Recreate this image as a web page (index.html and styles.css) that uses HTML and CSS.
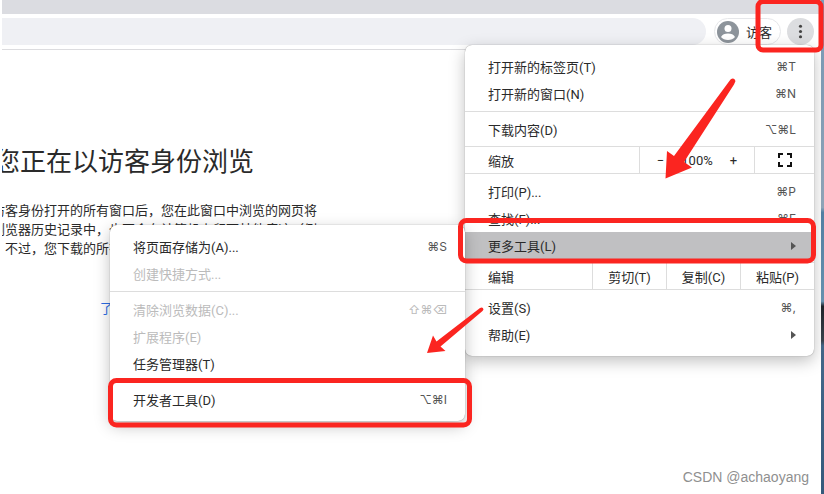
FILE: index.html
```
<!DOCTYPE html>
<html lang="zh-CN">

<head>
    <meta charset="UTF-8">
    <meta name="viewport" content="width=device-width, initial-scale=1.0">
    <title>访客</title>
    <link rel="stylesheet" href="styles.css">
</head>

<body>

    <div class="desktop">
        <div class="browser">
            <div class="tabstrip"></div>
            <div class="toolbar">
                <input class="omnibox" type="text" aria-label="地址栏">
                <button class="profile" type="button">
                    <svg class="avatar" viewBox="0 0 22 22" aria-hidden="true">
                        <circle cx="11" cy="11" r="11" fill="#8d949b" />
                        <circle cx="11" cy="7.5" r="3.5" fill="#fff" />
                        <path d="M4 16C5 13.500 8 12.500 11 12.500S17 13.500 18 16C16.500 18 14 19 11 19S5.500 18 4 16Z" fill="#fff" />
                    </svg>
                    访客
                </button>
                <button class="more" type="button" aria-label="更多">
                    <svg viewBox="0 0 26 26" aria-hidden="true">
                        <circle cx="13" cy="8" r="1.500" />
                        <circle cx="13" cy="13" r="1.500" />
                        <circle cx="13" cy="18" r="1.500" />
                    </svg>
                </button>
            </div>
            <main class="page">
                <h1>您正在以访客身份浏览</h1>
                <p>访客身份打开的所有窗口后，您在此窗口中浏览的网页将<br>浏览器历史记录中，也不会在计算机上留下其他痕迹（例<br>。不过，您下载的所有文件都会保留。</p>
                <a class="learn" href="#">了解详情</a>
            </main>
        </div>
        <div class="wallpaper"></div>
    </div>

    <div class="menu main-menu">
        <div class="group">
            <button class="item" type="button">打开新的标签页(T)<kbd>⌘T</kbd></button>
            <button class="item" type="button">打开新的窗口(N)<kbd>⌘N</kbd></button>
        </div>
        <div class="group">
            <button class="item" type="button">下载内容(D)<kbd>⌥⌘L</kbd></button>
        </div>
        <div class="split zoom-row">
            <span class="name">缩放</span>
            <div class="zoom">
                <button type="button">−</button>
                <span>100%</span>
                <button type="button">+</button>
            </div>
            <button class="full" type="button" aria-label="全屏">
                <svg viewBox="0 0 14 14" aria-hidden="true">
                    <path d="M1 5V1H5M9 1H13V5M13 9V13H9M5 13H1V9" />
                </svg>
            </button>
        </div>
        <div class="group">
            <button class="item" type="button">打印(P)...<kbd>⌘P</kbd></button>
            <button class="item" type="button">查找(F)...<kbd>⌘F</kbd></button>
            <button class="item active" type="button">更多工具(L)<span class="arrow"></span></button>
        </div>
        <div class="split edit-row">
            <span class="name">编辑</span>
            <button type="button">剪切(T)</button>
            <button type="button">复制(C)</button>
            <button type="button">粘贴(P)</button>
        </div>
        <div class="group">
            <button class="item" type="button">设置(S)<kbd>⌘,</kbd></button>
            <button class="item" type="button">帮助(E)<span class="arrow"></span></button>
        </div>
    </div>

    <div class="menu sub-menu">
        <div class="group">
            <button class="item" type="button">将页面存储为(A)...<kbd>⌘S</kbd></button>
            <button class="item" type="button" disabled>创建快捷方式...</button>
        </div>
        <div class="group">
            <button class="item" type="button" disabled>清除浏览数据(C)...<kbd>⇧⌘⌫</kbd></button>
            <button class="item" type="button" disabled>扩展程序(E)</button>
            <button class="item" type="button">任务管理器(T)</button>
        </div>
        <div class="group">
            <button class="item" type="button">开发者工具(D)<kbd>⌥⌘I</kbd></button>
        </div>
    </div>

    <!-- red marks over the menus -->
    <svg class="marks" width="824" height="494" viewBox="0 0 824 494" aria-hidden="true">
        <rect x="758" y="1.500" width="63" height="48.500" rx="5" />
        <rect x="460.500" y="220.500" width="353" height="40.500" rx="6" />
        <rect x="110.500" y="380.500" width="359" height="44.500" rx="6" />
        <path d="M730.500 79.500Q734 77 735.500 81L734 84.500L684 162L692 167.500L665.500 178.500L667 151L674 156Z" />
        <path d="M480 308Q483 306.500 483.500 309.500L482.500 311L440.500 346.500L445.500 351L427 353L433 335.500L436.500 341.500Z" />
    </svg>

    <div class="watermark">CSDN @achaoyang</div>

</body>

</html>
```
FILE: styles.css
```
* {
    box-sizing: border-box;
}

body {
    margin: 0;
    font-family: Roboto, "Noto Sans CJK SC", sans-serif;
    font-size: 13px;
    color: #2a2a2a;
    overflow: hidden;
}

button {
    font: inherit;
    color: inherit;
    background: none;
    border: 0;
    padding: 0;
}

.desktop {
    display: flex;
    height: 100vh;
    padding-left: 2px;
}

.browser {
    flex: 1;
    min-width: 0;
    background: #fff;
}

.wallpaper {
    width: 3px;
    background: linear-gradient(#7a9cb9 0, #93a9bd 42%, #5484a8 43%, #6a96b4 61%, #20252b 62%, #39444e 69%, #44698b 70%, #34597b 100%);
}

.tabstrip {
    height: 14px;
    background: #dbdce1;
}

.toolbar {
    display: flex;
    align-items: center;
    gap: 6px;
    height: 36px;
    padding-right: 7px;
    border-bottom: 1px solid #dcdcdf;
}

.omnibox {
    flex: 1;
    height: 27px;
    border: 0;
    border-radius: 0 14px 14px 0;
    background: #eff0f4;
}

.profile {
    display: flex;
    align-items: center;
    gap: 7px;
    height: 27px;
    margin-left: 2px;
    padding: 0 8px 0 2px;
    border: 1px solid #e6e7ea;
    border-radius: 14px;
}

.avatar {
    width: 22px;
    height: 22px;
}

.more {
    width: 27px;
    height: 27px;
    border-radius: 50%;
    background: #dcdde0;
}

.more svg {
    display: block;
    fill: #444;
}

.page {
    padding-top: 92px;
    overflow: hidden;
}

.page h1 {
    margin: 0 0 0 -8px;
    font-size: 26px;
    line-height: 40px;
    font-weight: 400;
    white-space: nowrap;
}

.page p {
    margin: 19px 0 0 -10px;
    line-height: 19px;
    white-space: nowrap;
}

.learn {
    display: inline-block;
    margin: 40px 0 0 98px;
    color: #2b6de5;
    text-decoration: none;
}

.menu {
    position: absolute;
    padding: 4px 0;
    background: #fff;
    border-radius: 7px;
    box-shadow: 0 0 1px rgba(0, 0, 0, 0.5), 0 5px 16px rgba(0, 0, 0, 0.25);
}

.main-menu {
    top: 45px;
    right: 10px;
    width: 349px;
}

.sub-menu {
    top: 225px;
    right: 359px;
    width: 355px;
}

.group {
    padding: 4px 0;
}

.group + .group {
    border-top: 1px solid #ddd;
}

.item {
    display: flex;
    align-items: center;
    justify-content: space-between;
    width: 100%;
    height: 27px;
    padding: 0 18px 0 23px;
}

.item:disabled {
    color: #bbb;
}

.item.active {
    background: #c0c0c2;
}

kbd {
    font-family: Inter, "DejaVu Sans", sans-serif;
    font-size: 12px;
    color: #555;
}

.item:disabled kbd {
    color: #bbb;
}

.arrow {
    border-left: 5px solid #555;
    border-top: 4px solid transparent;
    border-bottom: 4px solid transparent;
}

.split {
    display: flex;
    height: 28px;
    margin-top: -1px;
    border-top: 1px solid #ddd;
    border-bottom: 1px solid #ddd;
}

.split > * {
    display: flex;
    align-items: center;
    justify-content: center;
    border-left: 1px solid #ddd;
}

.split .name {
    flex: 1;
    justify-content: flex-start;
    padding-left: 23px;
    border-left: 0;
}

.zoom {
    width: 115px;
    gap: 17px;
}

.full {
    width: 60px;
}

.full svg {
    width: 14px;
    fill: none;
    stroke: #111;
    stroke-width: 2;
}

.edit-row button {
    width: 74px;
}

.marks {
    position: absolute;
    top: 0;
    left: 0;
    pointer-events: none;
}

.marks rect {
    fill: none;
    stroke: #fb2520;
    stroke-width: 5;
}

.marks path {
    fill: #fb2520;
}

.watermark {
    position: absolute;
    right: 15px;
    bottom: 8px;
    font-family: "Liberation Sans", sans-serif;
    font-size: 14px;
    line-height: 17px;
    color: #8f8f8f;
}
```
